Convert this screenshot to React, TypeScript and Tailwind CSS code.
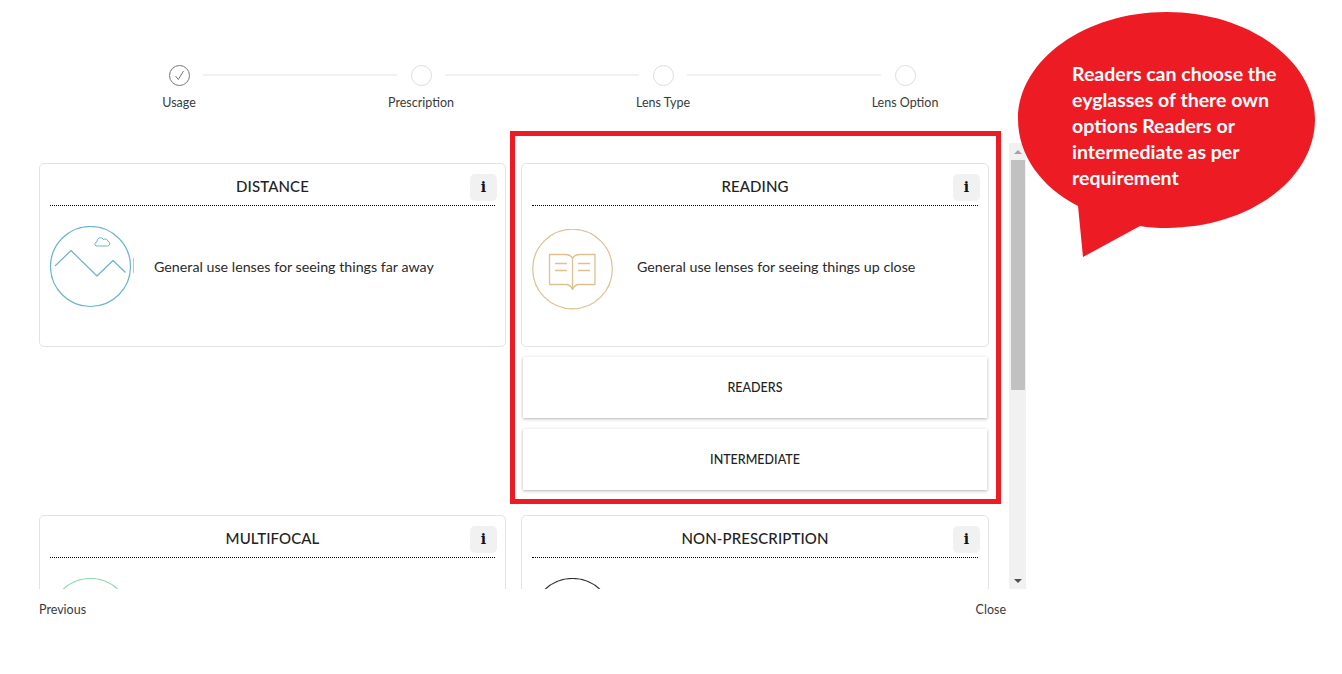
import React from "react";

const steps = ["Usage", "Prescription", "Lens Type", "Lens Option"];

function Mountain() {
  return (
    <svg width="86" height="82" viewBox="0 0 86 82" fill="none" className="shrink-0">
      <circle cx="40.5" cy="40.5" r="40" stroke="#6cb4cd" strokeWidth="1.2" />
      <path d="M5 40 L21 24.500 L47 50 L63 34.500 L75.500 46.500" stroke="#6cb4cd" strokeWidth="1.2" strokeLinejoin="round" />
      <path d="M46 20 h11.500 a2.400 2.400 0 0 0 .5-4.700 a3 3 0 0 0-4.500-1.800 a3.500 3.500 0 0 0-6.500 2.300 a2.300 2.300 0 0 0-1 4.200z" stroke="#6cb4cd" strokeWidth="1" />
      <path d="M83.500 32 V47" stroke="#9fdcbc" strokeWidth="1" />
    </svg>
  );
}

function Book() {
  return (
    <svg width="82" height="82" viewBox="0 0 82 82" fill="none" className="shrink-0">
      <circle cx="40.500" cy="40" r="39.800" stroke="#dfc08f" strokeWidth="1.200" />
      <path d="M17.500 25.500 H33 C37 25.500 39.500 26.500 40.500 29.500 C41.500 26.500 44 25.500 48 25.500 H63 V55.500 H47 C44 55.500 42 57 40.500 60.500 C39 57 37 55.500 34 55.500 H17.500 Z" stroke="#dfc08f" strokeWidth="1.300" strokeLinejoin="round" />
      <path d="M40.500 29.500 V60" stroke="#dfc08f" strokeWidth="1.300" />
      <path d="M23 34.500 H35 M23 41.500 H35 M46 34.500 H58 M46 41.500 H58" stroke="#dfc08f" strokeWidth="1.300" />
    </svg>
  );
}

function Card({ title, children }: { title: string; children?: React.ReactNode }) {
  return (
    <div className="relative h-[184px] rounded-[5px] border border-[#e3e3e3] bg-white px-[10px]">
      <div className="flex h-[42px] items-center justify-center border-b border-dotted border-black pt-[4px] text-[15px] font-medium tracking-[0.1px] text-[#222]">
        {title}
      </div>
      <button className="absolute right-[8px] top-[10px] flex h-[27px] w-[27px] items-center justify-center rounded-[5px] bg-[#f1f1f1] font-['DejaVu_Serif',serif] text-[14px] font-bold text-[#111]">
        i
      </button>
      {children}
    </div>
  );
}

function Option({ label }: { label: string }) {
  return (
    <div className="mx-[2px] flex h-[61px] items-center justify-center bg-white pt-[1px] text-[12.500px] font-medium text-[#222] shadow-[0_1px_3px_rgba(0,0,0,0.3)]">
      {label}
    </div>
  );
}

export default function App() {
  return (
    <div className="relative h-[674px] w-[1342px] overflow-hidden bg-white font-['Lato',sans-serif] text-[#333]">
      <div className="ml-[58px] grid w-[968px] grid-cols-4 pt-[65px]">
        {steps.map((s, i) => (
          <div key={s} className="relative flex flex-col items-center">
            <div className={`flex h-[21px] w-[21px] items-center justify-center rounded-full border ${i === 0 ? "border-[#777]" : "border-[#ddd]"}`}>
              {i === 0 && (
                <svg width="11" height="11" viewBox="0 0 11 11" fill="none">
                  <path d="M1.500 6 L4.300 9.500 L9.500 1" stroke="#777" strokeWidth="1" />
                </svg>
              )}
            </div>
            {i < 3 && <div className="absolute left-[145px] top-[9px] h-[2px] w-[194px] bg-[#f1f1f1]" />}
            <div className="mt-[7px] text-[12.500px] leading-[20px] text-[#3a3a3a]">{s}</div>
          </div>
        ))}
      </div>

      <div className="ml-[39px] mt-[30px] flex h-[446px] w-[987px]">
        <div className="h-full w-[970px] overflow-hidden pt-[20px]">
          <div className="grid grid-cols-[467px_468px] gap-x-[15px] gap-y-[25px]">
            <div>
              <Card title="DISTANCE">
                <div className="flex items-center pt-[20px]">
                  <Mountain />
                  <span className="ml-[18px] text-[14.250px] text-[#2a2a2a]">General use lenses for seeing things far away</span>
                </div>
              </Card>
            </div>
            <div>
              <Card title="READING">
                <div className="flex items-center pt-[23px]">
                  <Book />
                  <span className="ml-[23px] -mt-[6px] text-[14.250px] text-[#2a2a2a]">General use lenses for seeing things up close</span>
                </div>
              </Card>
              <div className="mt-[10px] flex flex-col gap-[11px]">
                <Option label="READERS" />
                <Option label="INTERMEDIATE" />
              </div>
            </div>
            <Card title="MULTIFOCAL">
              <div className="pt-[20px]">
                <svg width="82" height="82" viewBox="0 0 82 82" fill="none">
                  <circle cx="40.500" cy="40.500" r="40" stroke="#8fd9b0" strokeWidth="1.200" />
                </svg>
              </div>
            </Card>
            <Card title="NON-PRESCRIPTION">
              <div className="pt-[20px]">
                <svg width="82" height="82" viewBox="0 0 82 82" fill="none">
                  <circle cx="40.500" cy="40.500" r="40" stroke="#333" strokeWidth="1.200" />
                </svg>
              </div>
            </Card>
          </div>
        </div>
        <div className="flex h-full w-[17px] flex-col items-center bg-[#f1f1f1]">
          <div className="flex h-[17px] items-center justify-center">
            <div className="h-0 w-0 border-x-[4px] border-b-[4px] border-x-transparent border-b-[#a3a3a3]" />
          </div>
          <div className="h-[230px] w-[14px] bg-[#c1c1c1]" />
          <div className="flex-1" />
          <div className="flex h-[17px] items-center justify-center">
            <div className="h-0 w-0 border-x-[4px] border-t-[4px] border-x-transparent border-t-[#505050]" />
          </div>
        </div>
      </div>

      <div className="ml-[39px] mt-[11px] flex w-[967px] justify-between text-[12.500px] leading-[20px] text-[#3a3a3a]">
        <span>Previous</span>
        <span>Close</span>
      </div>

      <div className="absolute left-[510px] top-[131px] h-[373px] w-[491px] border-[5px] border-[#ed1c24]" />

      <svg className="absolute left-[1018px] top-[12px]" width="298" height="246" viewBox="0 0 298 246" fill="none">
        <path d="M148.500 0 C230 0 297 48 297 107 C297 168 230 216 148.500 216 C139 216 130 215.500 122 214 L65 245 L60 194 C23 175 0 143 0 107 C0 48 67 0 148.500 0 Z" fill="#ed1c24" />
      </svg>
      <div className="absolute left-[1072px] top-[61px] w-[240px] font-['Lato',sans-serif] text-[19.500px] font-bold leading-[26px] text-white">
        Readers can choose the
        <br />
        eyglasses of there own
        <br />
        options Readers or
        <br />
        intermediate as per
        <br />
        requirement
      </div>
    </div>
  );
}
